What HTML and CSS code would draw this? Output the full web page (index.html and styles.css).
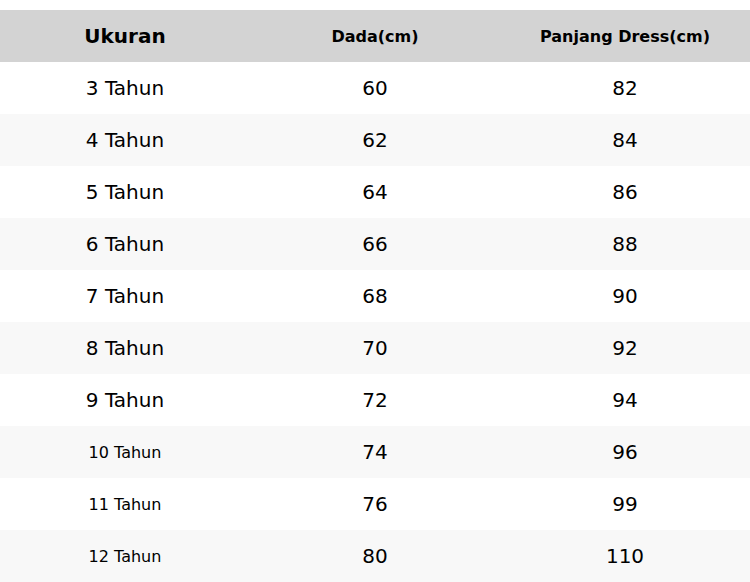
FILE: index.html
```html
<!DOCTYPE html>
<html>
<head>
<meta charset="utf-8">
<link rel="stylesheet" href="styles.css">
</head>
<body>
<div class="wrap">
<table class="size-table">
<thead>
<tr><th class="h-main">Ukuran</th><th>Dada(cm)</th><th>Panjang Dress(cm)</th></tr>
</thead>
<tbody>
<tr><td>3 Tahun</td><td>60</td><td>82</td></tr>
<tr><td>4 Tahun</td><td>62</td><td>84</td></tr>
<tr><td>5 Tahun</td><td>64</td><td>86</td></tr>
<tr><td>6 Tahun</td><td>66</td><td>88</td></tr>
<tr><td>7 Tahun</td><td>68</td><td>90</td></tr>
<tr><td>8 Tahun</td><td>70</td><td>92</td></tr>
<tr><td>9 Tahun</td><td>72</td><td>94</td></tr>
<tr><td class="small">10 Tahun</td><td>74</td><td>96</td></tr>
<tr><td class="small">11 Tahun</td><td>76</td><td>99</td></tr>
<tr><td class="small">12 Tahun</td><td>80</td><td>110</td></tr>
</tbody>
</table>
</div>
</body>
</html>
```
FILE: styles.css
```css
html, body {
  margin: 0;
  padding: 0;
  background: #ffffff;
}
.wrap {
  padding-top: 10px;
}
.size-table {
  width: 750px;
  border-collapse: collapse;
  table-layout: fixed;
  font-family: "DejaVu Sans", sans-serif;
  color: #000000;
}
.size-table th,
.size-table td {
  height: 52px;
  padding: 0;
  text-align: center;
  vertical-align: middle;
}
.size-table th {
  background: #d3d3d3;
  font-weight: bold;
  font-size: 16px;
}
.size-table th.h-main {
  font-size: 20px;
}
.size-table td {
  font-size: 20px;
}
.size-table td.small {
  font-size: 16px;
}
.size-table tbody tr:nth-child(even) td {
  background: #f8f8f8;
}
```
